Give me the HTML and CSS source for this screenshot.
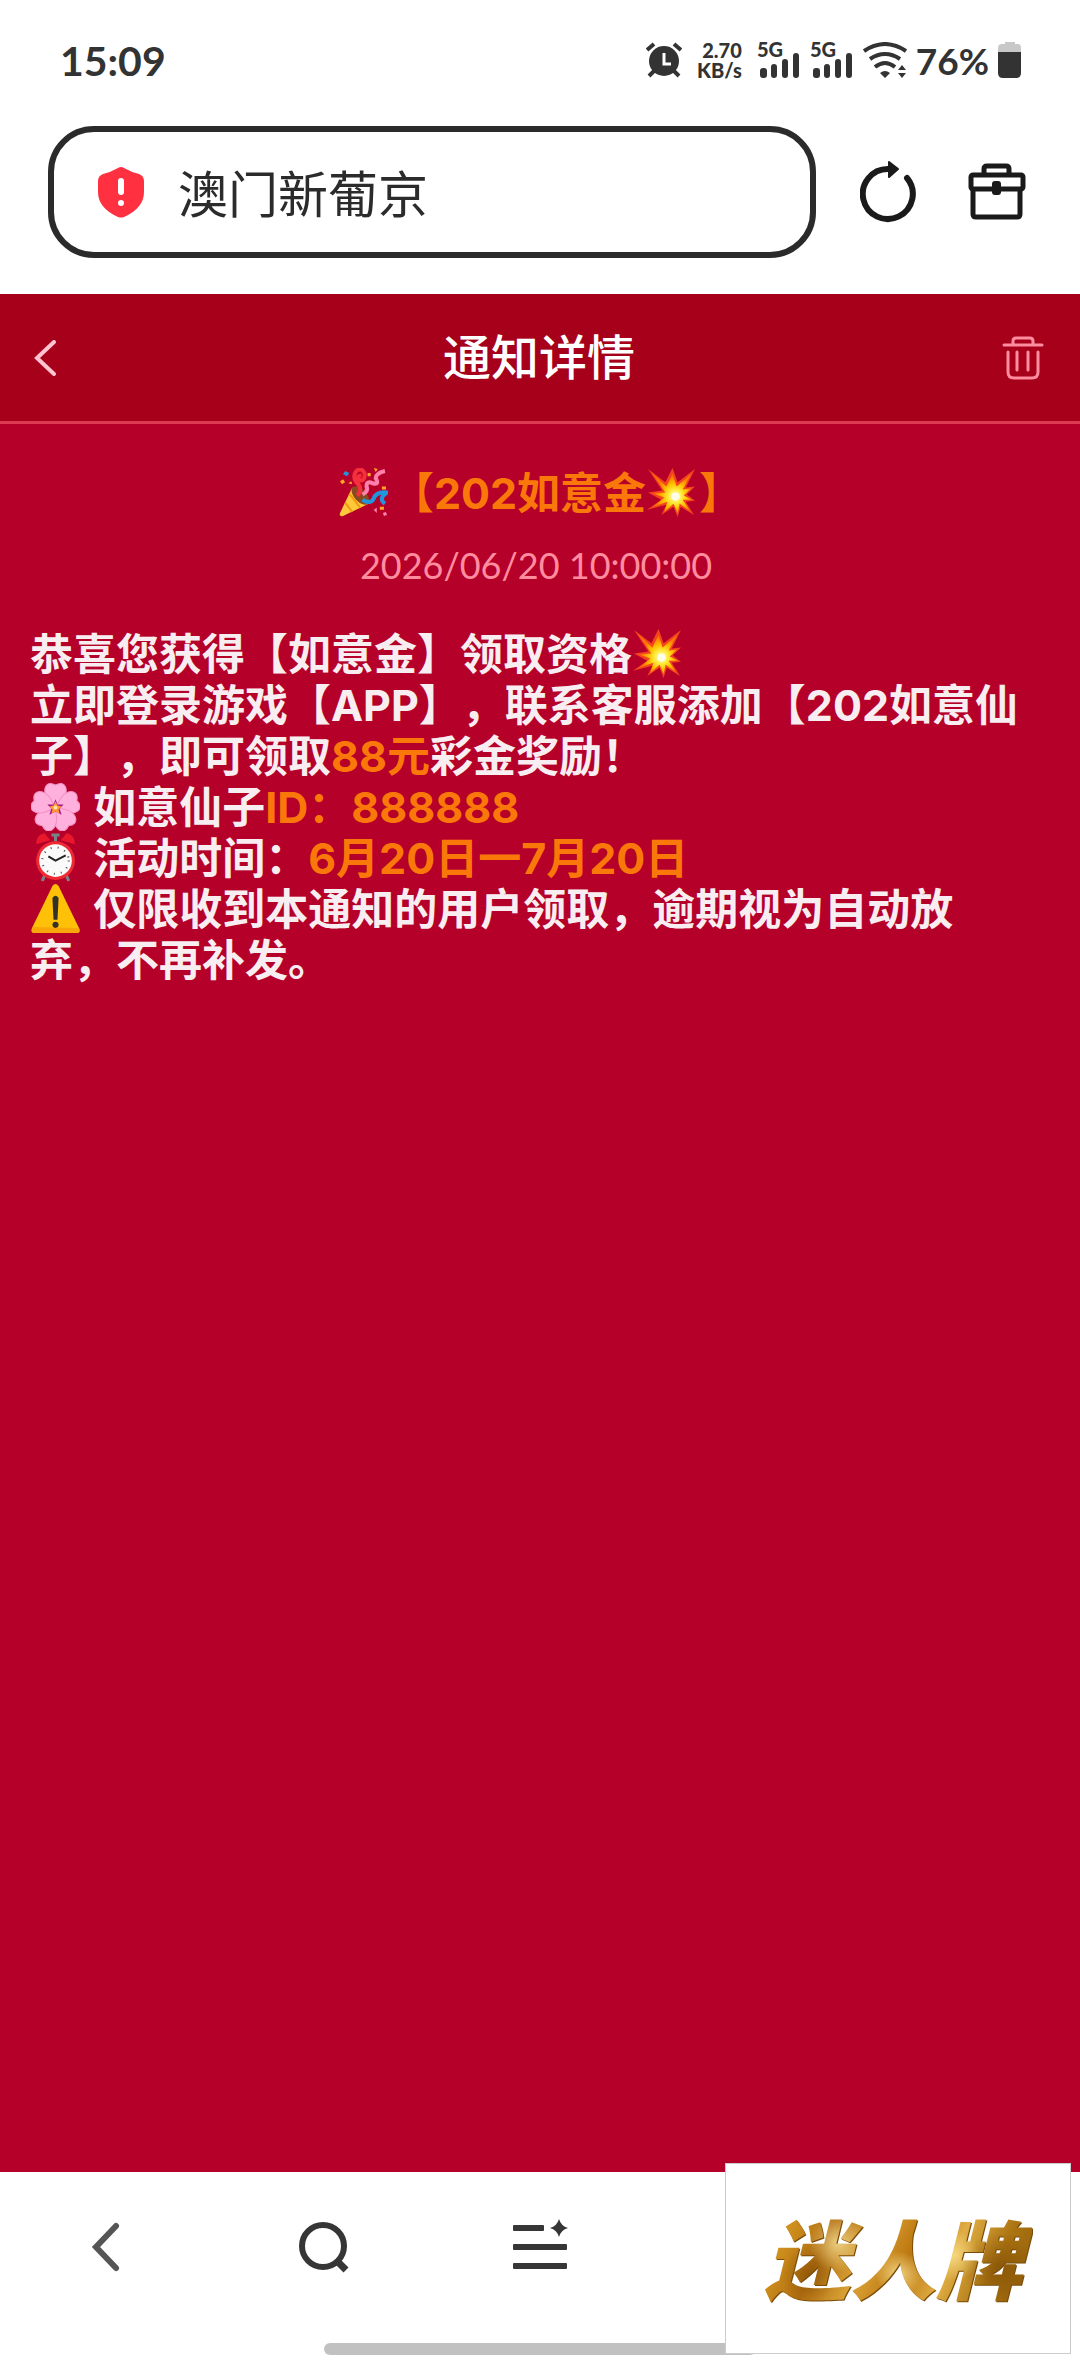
FILE: index.html
```html
<!DOCTYPE html>
<html lang="zh-CN">
<head>
    <meta charset="UTF-8">
    <meta name="viewport" content="width=device-width, initial-scale=1.0">
    <title>通知详情</title>
    <link rel="stylesheet" href="styles.css">
</head>
<body>
    <!-- shared emoji shapes -->
    <svg class="defs" aria-hidden="true">
        <defs>
            <radialGradient id="blast" cx="0.58" cy="0.58" r="0.5">
                <stop offset="0" stop-color="#fffde0"/>
                <stop offset="0.3" stop-color="#fff04a"/>
                <stop offset="0.6" stop-color="#ffc400"/>
                <stop offset="1" stop-color="#ff7a00"/>
            </radialGradient>
            <symbol id="boom" viewBox="0 0 48 48">
                <path d="M1 1 L18 14 L25 0 L30 14 L47 1 L38 19 L47 18 L39 26 L47 32 L38 33 L46 46 L33 38 L30 48 L26 38 L14 46 L19 36 L0 41 L14 31 L1 24 L15 22 Z" fill="#f4431f"/>
                <path d="M5 5 L19 18 L25 6 L29 18 L43 6 L35 21 L43 20 L36 27 L44 31 L35 31 L42 42 L32 35 L30 44 L26 35 L17 43 L20 33 L6 38 L17 29 L6 25 L18 24 Z" fill="url(#blast)"/>
                <circle cx="28" cy="28" r="4" fill="#fffde8"/>
            </symbol>
        </defs>
    </svg>

    <div class="status-bar">
        <span class="clock">15:09</span>
        <div class="status-icons">
            <svg width="36" height="36" viewBox="0 0 36 36" fill="none" stroke="#333" stroke-width="4">
                <circle cx="18" cy="19" r="15" fill="#333" stroke="none"/>
                <path d="M1 8 L8 2 M28 2 L35 8 M3 34 L8 29 M28 29 L33 34"/>
                <path d="M18 11 V22 H25" stroke="#fff" stroke-width="3"/>
            </svg>
            <div class="net-speed">
                <span>2.70</span>
                <span>KB/s</span>
            </div>
            <div class="signals">
                <svg width="44" height="46" viewBox="0 -4 44 46" fill="#333">
                    <text x="0" y="16" class="net-type">5G</text>
                    <rect x="3" y="27" width="7" height="10" rx="3"/>
                    <rect x="14" y="23" width="6" height="14" rx="3"/>
                    <rect x="25" y="18" width="6" height="19" rx="3"/>
                    <rect x="36" y="12" width="6" height="25" rx="3"/>
                </svg>
                <svg width="44" height="46" viewBox="0 -4 44 46" fill="#333">
                    <text x="0" y="16" class="net-type">5G</text>
                    <rect x="3" y="27" width="7" height="10" rx="3"/>
                    <rect x="14" y="23" width="6" height="14" rx="3"/>
                    <rect x="25" y="18" width="6" height="19" rx="3"/>
                    <rect x="36" y="12" width="6" height="25" rx="3"/>
                </svg>
            </div>
            <svg width="44" height="36" viewBox="0 0 44 36" fill="none" stroke="#333" stroke-width="4">
                <path d="M1 9 Q22 -5 43 9 M7 17 Q22 7 37 17 M12 25 Q22 17 32 25"/>
                <path d="M22 36 L17 31 Q22 27 27 31 Z M39 23 L43 28 H35 Z M39 36 L43 31 H35 Z" fill="#333" stroke="none"/>
            </svg>
            <span class="percent">76%</span>
            <svg width="24" height="36" viewBox="0 0 24 36">
                <path d="M7 0 H17 V2 H20 Q23 2 23 6 V11 H0 V6 Q0 2 4 2 H7 Z" fill="#c8c8c8"/>
                <path d="M0 10 H23 V31 Q23 36 18 36 H5 Q0 36 0 31 Z" fill="#333"/>
            </svg>
        </div>
    </div>

    <div class="address-row">
        <div class="address">
            <svg width="46" height="52" viewBox="0 0 46 52">
                <path d="M20 2 Q23 0 26 2 Q33 6 41 8 Q46 10 46 15 V26 Q46 42 26 51 Q23 52 20 51 Q0 42 0 26 V15 Q0 10 5 8 Q13 6 20 2 Z" fill="#ff3040"/>
                <path d="M23 15 V26" stroke="#fff" stroke-width="6" stroke-linecap="round"/>
                <circle cx="23" cy="37" r="3" fill="#fff"/>
            </svg>
            <input type="text" value="澳门新葡京" aria-label="地址栏">
        </div>
        <button class="tool" aria-label="刷新">
            <svg width="56" height="62" viewBox="0 0 56 62" fill="none" stroke="#1a1a1a" stroke-width="6" stroke-linecap="round">
                <path d="M47 17 A25 25 0 1 1 28 8"/>
                <path d="M29 1 L38 8 L29 16 Z" fill="#1a1a1a" stroke-width="2" stroke-linejoin="round"/>
            </svg>
        </button>
        <button class="tool" aria-label="工具箱">
            <svg width="58" height="58" viewBox="0 0 58 58" fill="none" stroke="#1a1a1a" stroke-width="5">
                <path d="M16 11 V6 Q16 3 19 3 H38 Q41 3 41 6 V11"/>
                <rect x="3" y="12" width="52" height="14" rx="2"/>
                <path d="M5 26 V51 Q5 54 8 54 H49 Q52 54 52 51 V26"/>
                <rect x="24" y="18" width="9" height="14" rx="3" fill="#1a1a1a" stroke="none"/>
            </svg>
        </button>
    </div>

    <header class="header">
        <button aria-label="返回">
            <svg width="24" height="36" viewBox="0 0 24 36" fill="none" stroke="#ffc4cf" stroke-width="4" stroke-linecap="round">
                <path d="M20 2 L3 18 L20 34"/>
            </svg>
        </button>
        <h1>通知详情</h1>
        <button aria-label="删除">
            <svg width="42" height="44" viewBox="0 0 42 44" fill="none" stroke="#ff8d9f" stroke-width="3" stroke-linecap="round">
                <path d="M2 9 H40 M11 8 V5 Q11 2 14 2 H28 Q31 2 31 5 V8"/>
                <path d="M6 16 V36 Q6 42 12 42 H30 Q36 42 36 36 V16 M15 16 V34 M26 16 V34"/>
            </svg>
        </button>
    </header>

    <main class="notice">
        <h2><svg class="emoji" viewBox="0 0 48 48" role="img" aria-label="🎉">
                <path d="M13 19 L1 44 Q0 48 4 47 L29 35 Z" fill="#ffc93c"/>
                <path d="M10 25 L21 39 M6 34 L13 43" stroke="#f09a10" stroke-width="2"/>
                <ellipse cx="21" cy="27" rx="6" ry="11" transform="rotate(-43 21 27)" fill="#8a4a20"/>
                <path d="M18 27 Q24 20 17 14 Q13 8 17 3 Q22 -1 25 5 Q26 13 20 12 Q17 8 22 7" fill="none" stroke="#f5303c" stroke-width="4"/>
                <path d="M23 26 Q29 23 27 18 Q27 12 33 15 Q40 17 36 10 Q36 5 45 3" fill="none" stroke="#ff80ab" stroke-width="4"/>
                <path d="M23 31 Q31 36 34 30 Q36 23 47 24 Q38 30 45 35" fill="none" stroke="#2196dc" stroke-width="4"/>
                <path d="M6 3 L10 5 L8 8 L4 6 Z" fill="#2196dc"/>
                <path d="M1 13 L4 11 L6 14 L3 16 Z M28 5 L31 5 V8 H28 Z M34 0 L38 1 L36 4 Z M9 15 L12 13 L13 16 Z M42 18 H46 V21 H42 Z M40 38 H44 V41 H40 Z" fill="#ffa726"/>
                <path d="M34 41 L37 39 V44 Z M43 44 L46 43 L47 46 L44 47 Z" fill="#ff80ab"/>
            </svg>【202如意金<svg class="emoji" role="img" aria-label="💥"><use href="#boom"/></svg>】</h2>
        <time datetime="2026-06-20T10:00:00">2026/06/20 10:00:00</time>

        <div class="content">
            <p>恭喜您获得【如意金】领取资格<svg class="emoji" role="img" aria-label="💥"><use href="#boom"/></svg></p>
            <p>立即登录游戏【APP】，联系客服添加【202如意仙子】，即可领取<em>88元</em>彩金奖励！</p>
            <p><svg class="emoji" viewBox="0 0 48 48" role="img" aria-label="🌸">
                <g fill="#ffb0dc" stroke="#f48fc4" stroke-width="1">
                    <path id="petal" d="M24 24 Q11 14 14 5 Q17 -1 24 3 Q31 -1 34 5 Q37 14 24 24 Z"/>
                    <use href="#petal" transform="rotate(72 24 25)"/>
                    <use href="#petal" transform="rotate(144 24 25)"/>
                    <use href="#petal" transform="rotate(216 24 25)"/>
                    <use href="#petal" transform="rotate(288 24 25)"/>
                </g>
                <path d="M24 17 L26 22 L32 22 L28 26 L30 32 L24 29 L18 32 L20 26 L16 22 L22 22 Z" fill="#a01890"/>
                <path d="M24 19 L26 23 L30 24 L27 27 L28 31 L24 29 L20 31 L21 27 L18 24 L22 23 Z" fill="#ff9838"/>
                <circle cx="24" cy="25" r="2" fill="#ffe0a0"/>
            </svg> 如意仙子<em>ID：888888</em></p>
            <p><svg class="emoji" viewBox="0 0 48 48" role="img" aria-label="⏰">
                <path d="M14 40 L11 47 M34 40 L37 47 M24 2 V8 M20 2 H28" stroke="#78838a" stroke-width="3"/>
                <path d="M5 11 Q5 2 13 0 L19 7 Z M43 11 Q43 2 35 0 L29 7 Z" fill="#e8182c"/>
                <circle cx="24" cy="27" r="19" fill="#ee2b32"/>
                <circle cx="24" cy="27" r="16" fill="#fafafa"/>
                <circle cx="24" cy="27" r="13" fill="none" stroke="#555" stroke-width="2" stroke-dasharray="1 6"/>
                <path d="M17 23 L24 27 L34 22" fill="none" stroke="#222" stroke-width="2"/>
            </svg> 活动时间：<em>6月20日一7月20日</em></p>
            <p><svg class="emoji" viewBox="0 0 48 48" role="img" aria-label="⚠️">
                <path d="M21 2 Q24 -2 27 2 L47 43 Q49 48 44 48 H4 Q-1 48 1 43 Z" fill="#ffc107"/>
                <path d="M2 42 Q0 48 4 48 H44 Q49 48 47 43 Z" fill="#f9a60a"/>
                <path d="M22 14 Q24 11 26 14 L25 34 H23 Z" fill="#33322a" stroke="#33322a" stroke-width="2"/>
                <circle cx="24" cy="40" r="3" fill="#33322a"/>
            </svg> 仅限收到本通知的用户领取，逾期视为自动放弃，不再补发。</p>
        </div>
    </main>

    <nav class="bottom-nav">
        <button aria-label="后退">
            <svg width="48" height="56" viewBox="0 0 48 56" fill="none" stroke="#555" stroke-width="6" stroke-linecap="round">
                <path d="M32 7 L12 28 L32 49"/>
            </svg>
        </button>
        <button aria-label="搜索">
            <svg width="52" height="56" viewBox="0 0 52 56" fill="none" stroke="#363636" stroke-width="6">
                <circle cx="25" cy="27" r="21"/>
                <path d="M39 42 L48 51" stroke-width="7"/>
            </svg>
        </button>
        <button aria-label="菜单">
            <svg width="56" height="56" viewBox="0 0 56 56" fill="#363636">
                <rect x="1" y="6" width="31" height="6" rx="1"/>
                <rect x="1" y="25" width="54" height="6" rx="1"/>
                <rect x="1" y="44" width="54" height="6" rx="1"/>
                <path d="M47 0 Q49 7 56 9 Q49 11 47 18 Q45 11 38 9 Q45 7 47 0 Z"/>
            </svg>
        </button>
        <div class="home-bar"></div>
    </nav>

    <div class="brand-card"><span>迷人牌</span></div>
</body>
</html>
```
FILE: styles.css
```css
* {
    box-sizing: border-box;
}
body {
    margin: 0;
    min-height: 100vh;
    display: flex;
    flex-direction: column;
    position: relative;
    background: white;
    color: #333;
    font-family: Lato, "Noto Sans CJK SC", sans-serif;
}
button {
    display: flex;
    padding: 0;
    border: none;
    background: none;
    cursor: pointer;
}
svg {
    display: block;
    flex: none;
}
.defs {
    position: absolute;
    width: 0;
    height: 0;
}

/* phone status bar */
.status-bar {
    height: 120px;
    padding: 0 58px 0 60px;
    display: flex;
    justify-content: space-between;
    align-items: center;
}
.clock {
    font-size: 41px;
    font-weight: bold;
}
.status-icons {
    display: flex;
    align-items: center;
    gap: 9px;
}
.net-speed {
    display: flex;
    flex-direction: column;
    align-items: flex-end;
    margin: 0 6px;
    font-size: 20px;
    line-height: 20px;
    font-weight: 900;
}
.net-type {
    font-size: 20px;
    font-weight: 900;
}
.signals {
    display: flex;
    gap: 9px;
}
.percent {
    font-size: 37px;
    font-weight: bold;
}

/* browser address bar */
.address-row {
    display: flex;
    align-items: center;
    padding: 6px 54px 36px 48px;
    gap: 44px;
}
.address {
    flex: 1;
    min-width: 0;
    height: 132px;
    display: flex;
    align-items: center;
    gap: 34px;
    padding: 0 44px;
    border: 6px solid #2b2b2b;
    border-radius: 46px;
}
.address input {
    flex: 1;
    min-width: 0;
    padding: 0 0 2px;
    border: none;
    outline: none;
    background: none;
    color: #2b2b2b;
    font-family: inherit;
    font-size: 50px;
}
.tool + .tool {
    margin-left: 8px;
}

/* page header */
.header {
    height: 130px;
    padding: 0 36px 0 34px;
    display: grid;
    grid-template-columns: 1fr auto 1fr;
    align-items: center;
    background: #a6001b;
    border-bottom: 3px solid #dc3a52;
}
.header h1 {
    margin: 0;
    padding-bottom: 8px;
    color: white;
    font-size: 48px;
    font-weight: 500;
}
.header button:last-child {
    justify-self: end;
}

/* notice */
.notice {
    flex: 1;
    padding: 44px 30px;
    background: #b50029;
    color: #f8edf0;
    font-family: Inter, "Noto Sans CJK SC", sans-serif;
    text-spacing-trim: space-all;
}
.notice h2 {
    margin: 0;
    color: #fa780a;
    font-size: 43px;
    line-height: 51px;
    text-align: center;
}
.notice time {
    display: block;
    margin: 22px 0 40px;
    padding-right: 8px;
    color: #ff8d9f;
    font-family: Lato, sans-serif;
    font-size: 36px;
    line-height: 48px;
    text-align: center;
}
.content {
    padding-right: 16px;
    font-size: 43px;
    line-height: 51px;
    font-weight: bold;
}
.content p {
    margin: 0;
}
.content em {
    color: #fa780a;
    font-style: normal;
}
.emoji {
    display: inline-block;
    width: 49px;
    height: 49px;
    margin: 0 3px 0 1px;
    vertical-align: top;
}

/* browser bottom bar */
.bottom-nav {
    height: 204px;
    display: grid;
    grid-template-columns: repeat(5, 1fr);
    grid-template-rows: 150px 1fr;
    justify-items: center;
    align-items: center;
}
.home-bar {
    grid-column: 1 / -1;
    align-self: start;
    width: 40%;
    height: 12px;
    margin-top: 21px;
    border-radius: 6px;
    background: #c1c1c1;
}

/* floating brand card */
.brand-card {
    position: absolute;
    right: 9px;
    bottom: 22px;
    width: 346px;
    height: 191px;
    display: flex;
    justify-content: center;
    align-items: center;
    padding: 0 10px 6px 0;
    background: white;
    border: 1px solid #ccc;
}
.brand-card span {
    padding: 0 10px;
    background:
        radial-gradient(circle at 30% 40%, rgba(255, 240, 170, 0.7), transparent 14%),
        radial-gradient(circle at 52% 65%, rgba(255, 236, 160, 0.8), transparent 14%),
        radial-gradient(circle at 72% 50%, rgba(255, 232, 150, 0.7), transparent 12%),
        radial-gradient(circle at 20% 65%, rgba(120, 70, 0, 0.5), transparent 12%),
        radial-gradient(circle at 88% 60%, rgba(110, 62, 0, 0.5), transparent 14%),
        linear-gradient(115deg, #9c6408, #d0921e 15%, #b06c10 28%, #dba438 42%, #bc760e 55%, #e0ae44 68%, #ac7412 82%, #8a5808);
    -webkit-background-clip: text;
    background-clip: text;
    color: transparent;
    font-family: "Noto Sans CJK SC", sans-serif;
    font-size: 86px;
    font-style: italic;
    font-weight: 900;
    filter: drop-shadow(1px 1px 0 #7a4c08);
}
```
